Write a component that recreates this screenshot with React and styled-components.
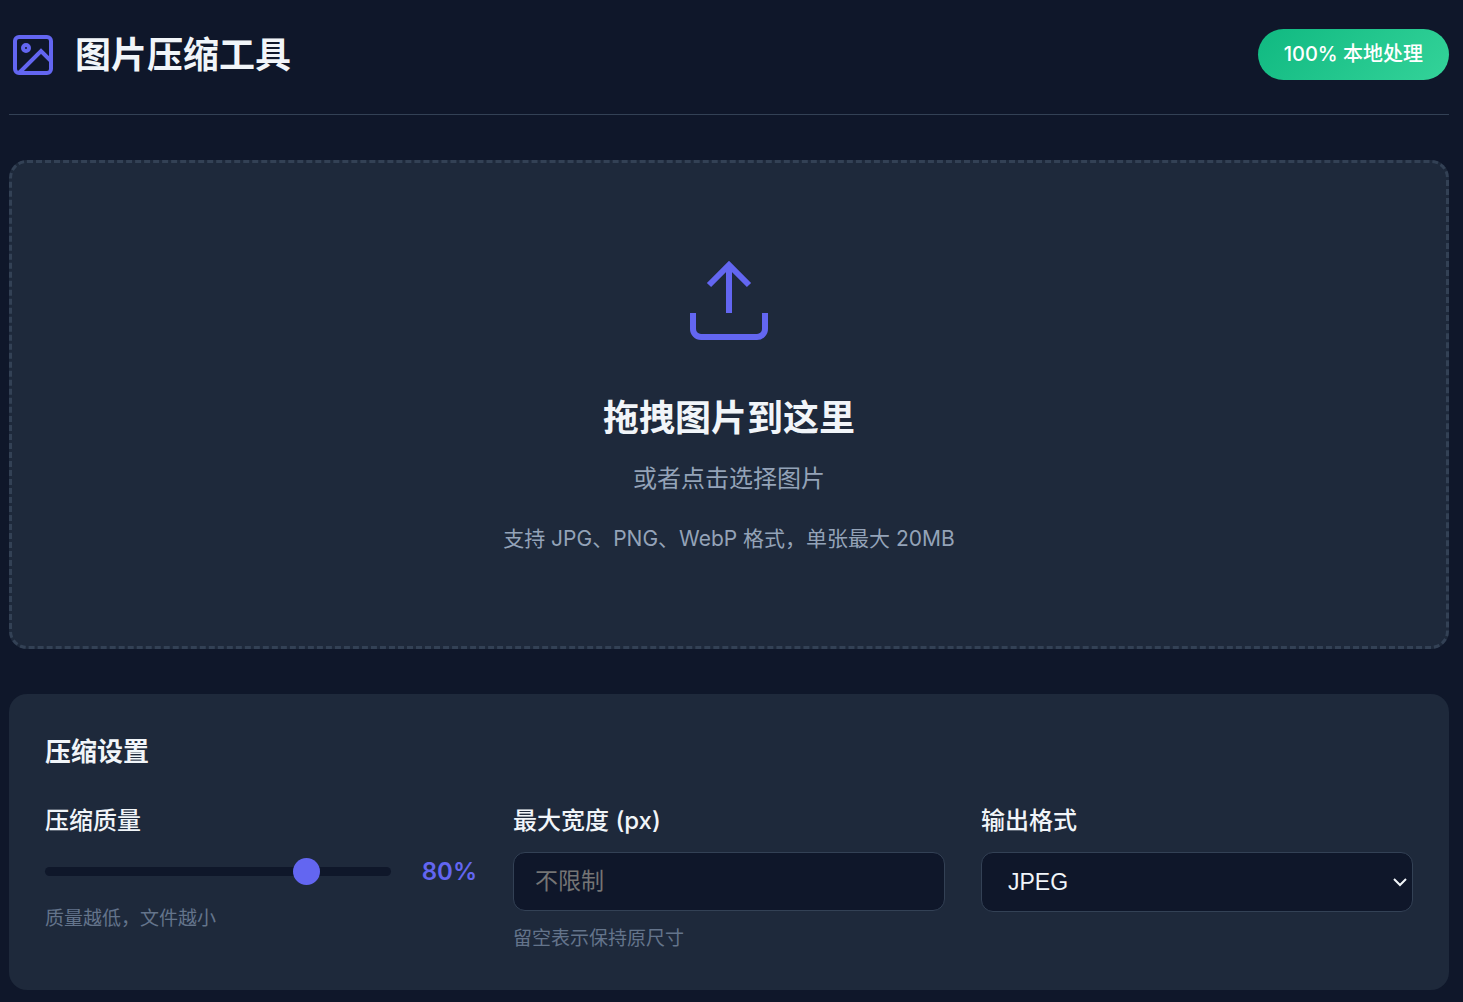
import React, { useState } from 'react';
import styled, { createGlobalStyle } from 'styled-components';

const GlobalStyle = createGlobalStyle`
  * {
    margin: 0;
    padding: 0;
    box-sizing: border-box;
  }

  body {
    background: #0f172a;
    color: #f1f5f9;
    font-family: Inter, 'Noto Sans CJK SC', sans-serif;
    font-size: 24px;
    line-height: 39px;
  }
`;

const Page = styled.div`
  padding: 29px 14px 12px 9px;
`;

const Header = styled.header`
  display: flex;
  align-items: flex-start;
  justify-content: space-between;
  padding-bottom: 33px;
  margin-bottom: 45px;
  border-bottom: 1px solid #334155;
`;

const Logo = styled.div`
  display: flex;
  align-items: center;
  gap: 18px;
`;

const LogoIcon = styled.svg`
  width: 48px;
  height: 48px;
  color: #6366f1;
`;

const Title = styled.h1`
  font-size: 36px;
  font-weight: 700;
  line-height: 52px;
`;

const Badge = styled.span`
  padding: 9px 26px;
  border-radius: 30px;
  background: linear-gradient(135deg, #10b981, #34d399);
  color: white;
  font-size: 20px;
  font-weight: 500;
  line-height: 33px;
`;

const DropZone = styled.button`
  display: flex;
  flex-direction: column;
  align-items: center;
  width: 100%;
  padding: 90px 36px;
  margin-bottom: 45px;
  border: 3px dashed #334155;
  border-radius: 18px;
  background: #1e293b;
  color: inherit;
  font-family: inherit;
  cursor: pointer;

  &:hover {
    border-color: #6366f1;
  }
`;

const UploadIcon = styled.svg`
  width: 96px;
  height: 96px;
  margin-bottom: 40px;
  color: #6366f1;
`;

const DropTitle = styled.span`
  margin-bottom: 12px;
  font-size: 36px;
  font-weight: 600;
  line-height: 58px;
`;

const DropText = styled.span`
  margin-bottom: 24px;
  color: #94a3b8;
  font-size: 24px;
  line-height: 39px;
`;

const DropHint = styled.span`
  color: #94a3b8;
  font-size: 21px;
  line-height: 34px;
`;

const Panel = styled.section`
  padding: 36px;
  border-radius: 18px;
  background: #1e293b;
`;

const PanelTitle = styled.h2`
  margin-bottom: 28px;
  font-size: 26px;
  font-weight: 600;
  line-height: 43px;
`;

const Settings = styled.div`
  display: grid;
  grid-template-columns: repeat(3, minmax(0, 1fr));
  gap: 36px;
`;

const Field = styled.div`
  display: flex;
  flex-direction: column;
  gap: 12px;
`;

const Label = styled.label`
  font-weight: 500;
`;

const Hint = styled.p`
  color: #64748b;
  font-size: 19px;
  line-height: 31px;
`;

const SliderRow = styled.div`
  display: flex;
  align-items: center;
  gap: 18px;
`;

const Slider = styled.input`
  flex: 1;
  min-width: 0;
  height: 9px;
  border-radius: 5px;
  background: #0f172a;
  appearance: none;
  outline: none;

  &::-webkit-slider-thumb {
    appearance: none;
    width: 27px;
    height: 27px;
    border-radius: 50%;
    background: #6366f1;
    cursor: pointer;
  }
`;

const SliderValue = styled.output`
  min-width: 68px;
  color: #6366f1;
  font-weight: 600;
  text-align: right;
`;

const TextInput = styled.input`
  width: 100%;
  height: 59px;
  padding: 0 21px;
  border: 1px solid #334155;
  border-radius: 12px;
  background: #0f172a;
  color: #f1f5f9;
  font-family: 'Liberation Sans', 'Noto Sans CJK SC', sans-serif;
  font-size: 23px;

  &::placeholder {
    color: #757575;
  }

  &:focus {
    outline: none;
    border-color: #6366f1;
  }
`;

const SelectBox = styled.div`
  display: grid;
  grid-template-areas: 'control';
  align-items: center;
`;

const Select = styled.select`
  grid-area: control;
  width: 100%;
  height: 60px;
  padding: 0 36px 0 26px;
  border: 1px solid #334155;
  border-radius: 12px;
  background: #0f172a;
  color: #f1f5f9;
  font-family: 'Liberation Sans', 'Noto Sans CJK SC', sans-serif;
  font-size: 23px;
  appearance: none;

  &:focus {
    outline: none;
    border-color: #6366f1;
  }
`;

const SelectArrow = styled.svg`
  grid-area: control;
  justify-self: end;
  width: 14px;
  height: 10px;
  margin-right: 6px;
  pointer-events: none;
`;

const App = () => {
  const [quality, setQuality] = useState(80);
  const [maxWidth, setMaxWidth] = useState('');
  const [format, setFormat] = useState('jpeg');

  return (
    <>
      <GlobalStyle />
      <Page>
        <Header>
          <Logo>
            <LogoIcon viewBox="0 0 24 24" fill="none" stroke="currentColor" strokeWidth="2">
              <rect x="3" y="3" width="18" height="18" rx="2" ry="2" />
              <circle cx="8.5" cy="8.5" r="1.5" />
              <polyline points="21 15 16 10 5 21" />
            </LogoIcon>
            <Title>图片压缩工具</Title>
          </Logo>
          <Badge>100% 本地处理</Badge>
        </Header>

        <main>
          <DropZone type="button">
            <UploadIcon viewBox="0 0 24 24" fill="none" stroke="currentColor" strokeWidth="1.5">
              <path d="M21 15v4a2 2 0 0 1-2 2H5a2 2 0 0 1-2-2v-4" />
              <polyline points="17 8 12 3 7 8" />
              <line x1="12" y1="3" x2="12" y2="15" />
            </UploadIcon>
            <DropTitle>拖拽图片到这里</DropTitle>
            <DropText>或者点击选择图片</DropText>
            <DropHint>支持 JPG、PNG、WebP 格式，单张最大 20MB</DropHint>
          </DropZone>

          <Panel>
            <PanelTitle>压缩设置</PanelTitle>
            <Settings>
              <Field>
                <Label htmlFor="quality">压缩质量</Label>
                <SliderRow>
                  <Slider
                    id="quality"
                    type="range"
                    min="10"
                    max="100"
                    value={quality}
                    onChange={(e) => setQuality(e.target.value)}
                  />
                  <SliderValue htmlFor="quality">{quality}%</SliderValue>
                </SliderRow>
                <Hint>质量越低，文件越小</Hint>
              </Field>

              <Field>
                <Label htmlFor="maxWidth">最大宽度 (px)</Label>
                <TextInput
                  id="maxWidth"
                  type="number"
                  placeholder="不限制"
                  value={maxWidth}
                  onChange={(e) => setMaxWidth(e.target.value)}
                />
                <Hint>留空表示保持原尺寸</Hint>
              </Field>

              <Field>
                <Label htmlFor="format">输出格式</Label>
                <SelectBox>
                  <Select id="format" value={format} onChange={(e) => setFormat(e.target.value)}>
                    <option value="jpeg">JPEG</option>
                    <option value="png">PNG</option>
                    <option value="webp">WebP</option>
                  </Select>
                  <SelectArrow viewBox="0 0 14 10" fill="none" stroke="#f1f5f9" strokeWidth="2">
                    <polyline points="1 2 7 8 13 2" />
                  </SelectArrow>
                </SelectBox>
              </Field>
            </Settings>
          </Panel>
        </main>
      </Page>
    </>
  );
};

export default App;
